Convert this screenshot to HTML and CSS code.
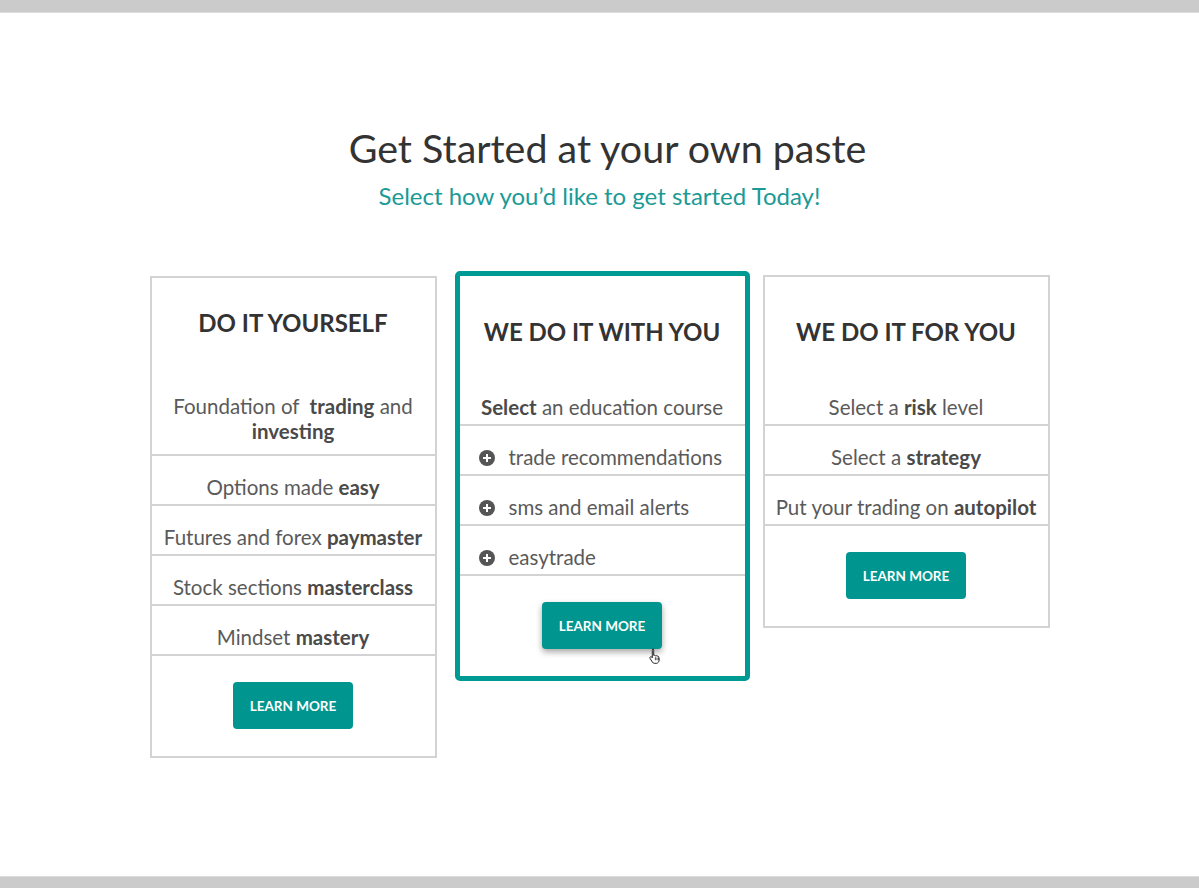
FILE: index.html
```html
<!DOCTYPE html>
<html lang="en">
<head>
<meta charset="utf-8">
<title>Get Started</title>
<link rel="stylesheet" href="styles.css">
</head>
<body>
<div class="bar bar-top"></div>
<main class="main">
  <h1 class="title">Get Started at your own paste</h1>
  <p class="subtitle">Select how you’d like to get started Today!</p>
  <div class="cards">
    <section class="card card-diy">
      <h2 class="card-title">DO IT YOURSELF</h2>
      <div class="row row-first">Foundation of &nbsp;<b>trading</b> and<br><b>investing</b></div>
      <div class="row">Options made <b>easy</b></div>
      <div class="row">Futures and forex <b>paymaster</b></div>
      <div class="row">Stock sections <b>masterclass</b></div>
      <div class="row">Mindset <b>mastery</b></div>
      <div class="foot"><a class="btn" href="#">LEARN MORE</a></div>
    </section>
    <section class="card card-with">
      <h2 class="card-title">WE DO IT WITH YOU</h2>
      <div class="row"><b>Select</b> an education course</div>
      <div class="row row-plus"><span class="plus"></span>trade recommendations</div>
      <div class="row row-plus"><span class="plus"></span>sms and email alerts</div>
      <div class="row row-plus"><span class="plus"></span>easytrade</div>
      <div class="foot">
        <a class="btn btn-hover" href="#">LEARN MORE
          <svg class="cursor" width="14" height="16" viewBox="0 0 14 16" aria-hidden="true">
            <path d="M4.5 1.2c.7 0 1.2.5 1.2 1.2v5l.4-.1c.6-.2 1.2 0 1.4.5.5-.3 1.2-.2 1.5.3.5-.3 1.3-.1 1.6.5l.2.4c.2.5.3 1 .3 1.6v1.6c0 1.5-1 2.8-2.4 3.1H6.4c-.9 0-1.600-.5-2-1.2L2 10.3c-.3-.6-.1-1.2.4-1.5.5-.3 1.1-.1 1.4.3l.5.7V2.4c0-.7.5-1.2 1.2-1.2z" fill="#fff" stroke="#222" stroke-width="1"/>
            <path d="M7.4 9.2v3M9 9.5v2.7M10.6 9.9v2.3" stroke="#222" stroke-width=".8"/>
          </svg>
        </a>
      </div>
    </section>
    <section class="card card-for">
      <h2 class="card-title">WE DO IT FOR YOU</h2>
      <div class="row">Select a <b>risk</b> level</div>
      <div class="row">Select a <b>strategy</b></div>
      <div class="row">Put your trading on <b>autopilot</b></div>
      <div class="foot"><a class="btn" href="#">LEARN MORE</a></div>
    </section>
  </div>
</main>
<div class="bar bar-bottom"></div>
</body>
</html>
```

FILE: styles.css
```css
* { box-sizing: border-box; }
html, body { margin: 0; padding: 0; }
body {
  height: 888px;
  display: flex;
  flex-direction: column;
  background: #fff;
  font-family: Lato, "Open Sans", "Liberation Sans", sans-serif;
  color: #555;
}
.bar { background: #cbcbcb; flex: none; }
.bar-top { height: 13px; border-bottom: 1px solid #dcdcdc; }
.bar-bottom { height: 12px; border-top: 1px solid #dcdcdc; }
.main {
  flex: 1;
  display: flex;
  flex-direction: column;
  align-items: center;
  padding-top: 112px;
}
.title {
  margin: 0 0 0 16px;
  font-size: 39.4px;
  font-weight: 400;
  line-height: 46px;
  color: #333;
}
.subtitle {
  margin: 10px 0 0;
  font-size: 24px;
  line-height: 30px;
  color: #1b9a96;
}
.cards {
  margin-top: 64px;
  display: flex;
  align-items: flex-start;
  justify-content: center;
}
.card {
  width: 287px;
  border: 2px solid #d3d3d3;
  background: #fff;
  display: flex;
  flex-direction: column;
}
.card-diy { margin-top: 1px; }
.card-with {
  width: 295px;
  border: 5px solid #009a95;
  border-radius: 5px;
  margin: -4px 13px 0 18px;
}
.card-title {
  margin: 0;
  padding: 41px 4px 30px;
  text-align: center;
  font-size: 24px;
  line-height: 28px;
  font-weight: 700;
  color: #333;
}
.card-diy .card-title { padding: 31px 4px 38px; }
.card-with .card-title { padding: 42px 4px 30px; }
.row {
  padding: 19px 4px 4px;
  border-bottom: 2px solid #d3d3d3;
  text-align: center;
  font-size: 20.5px;
  line-height: 25px;
  color: #5a5a5a;
  white-space: nowrap;
}
.row b { font-weight: 700; color: #4a4a4a; }
.row-first { padding-bottom: 10px; }
.row-plus {
  display: flex;
  align-items: center;
  text-align: left;
  padding-left: 19px;
}
.plus {
  position: relative;
  flex: none;
  width: 16px;
  height: 16px;
  border-radius: 50%;
  background: #555;
  margin-right: 14px;
  margin-top: 1px;
}
.plus::before, .plus::after {
  content: "";
  position: absolute;
  background: #fff;
  left: 50%;
  top: 50%;
  transform: translate(-50%, -50%);
}
.plus::before { width: 8px; height: 2px; }
.plus::after { width: 2px; height: 8px; }
.foot {
  padding: 26px 0 27px;
  display: flex;
  justify-content: center;
}
.btn {
  position: relative;
  display: flex;
  align-items: center;
  justify-content: center;
  width: 120px;
  height: 47px;
  border-radius: 4px;
  background: #00968f;
  color: #fff;
  font-size: 13.5px;
  font-weight: 700;
  text-decoration: none;
}
.btn-hover { box-shadow: 0 3px 6px rgba(0, 0, 0, 0.35); }
.cursor {
  position: absolute;
  right: 0;
  bottom: -15px;
}
```
